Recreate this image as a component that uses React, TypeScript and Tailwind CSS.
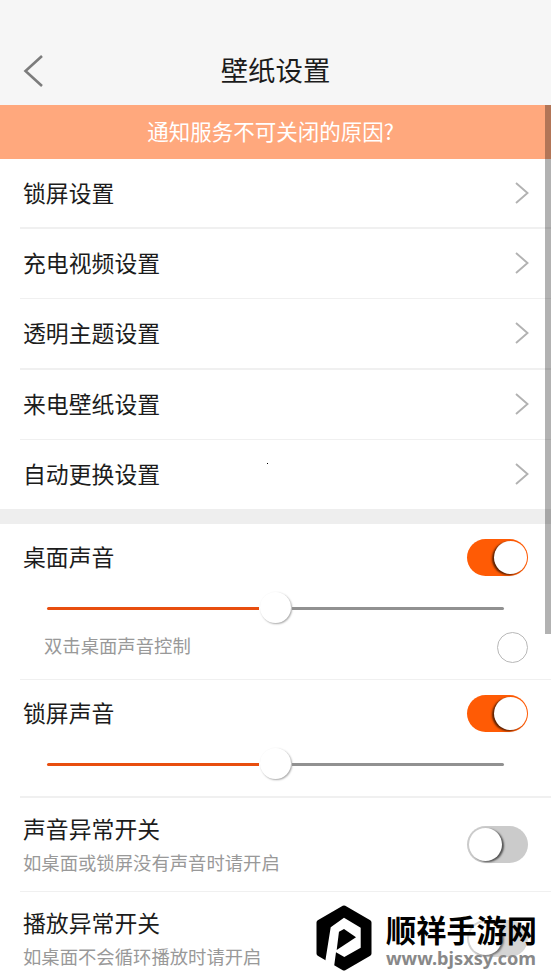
import clsx from 'clsx';

const links = [
  { label: '锁屏设置', className: 'h-[70px] border-b-2' },
  { label: '充电视频设置', className: 'h-[70px] border-b' },
  { label: '透明主题设置', className: 'h-[71px] border-b-2' },
  { label: '来电壁纸设置', className: 'h-[70px] border-b' },
  { label: '自动更换设置', className: 'h-[69px]' },
];

function Chevron() {
  return (
    <svg className="mb-px h-[22px] w-[14px]" viewBox="0 0 14 22" fill="none" stroke="#b2b2b2" strokeWidth="1.9">
      <path d="M1 1 L12.5 11 L1 21" />
    </svg>
  );
}

function Toggle({ on, faded }: { on: boolean; faded?: boolean }) {
  return (
    <span
      className={clsx(
        'flex h-[37px] w-[61px] shrink-0 items-center rounded-full',
        on ? 'justify-end bg-[#ff5b05] pr-[1.5px]' : 'justify-start bg-[#cbcbcb] pl-[2px]',
        faded && 'opacity-80',
      )}
    >
      <span
        className={clsx(
          'size-[33px] rounded-full bg-white',
          on ? 'shadow-[-2px_1px_2px_rgba(0,0,0,0.65)]' : 'shadow-[2px_1px_2px_rgba(0,0,0,0.6)]',
        )}
      />
    </span>
  );
}

function VolumeSlider() {
  return (
    <div className="ml-[47px] flex h-[32px] w-[457px] items-center">
      <span className="h-[3px] w-[212px] rounded-l-full bg-[#e84e0f]" />
      <span className="mx-px mb-[2px] size-[31px] rounded-full bg-white shadow-[1px_1px_2px_rgba(0,0,0,0.35)]" />
      <span className="h-[3px] flex-1 rounded-r-full bg-[#919191]" />
    </div>
  );
}

function SwitchRow({
  title,
  hint,
  className,
  faded,
}: {
  title: string;
  hint: string;
  className: string;
  faded?: boolean;
}) {
  return (
    <div className={clsx('ml-[20px] flex justify-between border-[#f0f0f0] pr-[23px] pl-[3px]', className)}>
      <div>
        <p className="text-[22.85px] leading-[34px]">{title}</p>
        <p className="text-[18.35px] leading-[34px] text-[#999]">{hint}</p>
      </div>
      <div className="pt-[15px]">
        <Toggle on={false} faded={faded} />
      </div>
    </div>
  );
}

function Watermark() {
  return (
    <div className="absolute top-[905px] left-[316px] flex">
      <svg className="h-[66px] w-[56px]" viewBox="0 0 56 66">
        <path
          d="M28 3 L53 17.5 V48.5 L28 63 L3 48.5 V17.5 Z"
          fill="#000"
          stroke="#000"
          strokeWidth="5"
          strokeLinejoin="round"
        />
        <path d="M14.7 22.3 L28 12.7 L44.7 22.7 V42.7 L28.3 52 L20 47.3 L18 62 L9.3 56 Z" fill="#fff" />
        <path d="M28 24 L40 32.3 L20.7 45 L23 26.7 Z" fill="#000" />
      </svg>
      <div className="pl-[14px] font-bold">
        <p className="mt-[6px] text-[30.2px] leading-[36px] whitespace-nowrap text-black">顺祥手游网</p>
        <p className="font-['Noto_Sans',sans-serif] text-[18.2px] leading-[22px] whitespace-nowrap text-[#888]">
          www.bjsxsy.com
        </p>
      </div>
    </div>
  );
}

export default function App() {
  return (
    <div className="relative h-[979px] w-[551px] overflow-hidden bg-white font-['Noto_Sans_CJK_SC',sans-serif] text-[#1c1c1c]">
      <header className="grid h-[105px] grid-cols-[60px_1fr_60px] items-center bg-[#f6f6f6] pt-[36px]">
        <svg className="ml-[23px] h-[32px] w-[20px]" viewBox="0 0 20 32" fill="none" stroke="#7c7c7c" strokeWidth="2.6">
          <path d="M19 1 L2.5 16 L19 31" />
        </svg>
        <h1 className="pb-[3px] text-center text-[27.4px] leading-[40px]">壁纸设置</h1>
      </header>

      <div className="flex h-[54px] items-center justify-center bg-[#ffa87d] pr-[10px] pb-[2px] text-[21.5px] text-white">
        通知服务不可关闭的原因?
      </div>

      <nav>
        {links.map((link) => (
          <div
            key={link.label}
            className={clsx(
              'ml-[20px] flex items-center justify-between border-[#f0f0f0] pr-[22px] pl-[3px] text-[22.85px]',
              link.className,
            )}
          >
            <span className="pb-[2px]">{link.label}</span>
            <Chevron />
          </div>
        ))}
      </nav>

      <div className="h-[15px] bg-[#eee]" />

      {/* Desktop sound */}
      <section className="h-[156px] pt-[15px]">
        <div className="flex h-[37px] items-center justify-between pr-[23px] pl-[23px] text-[22.85px]">
          <span className="pb-[2px]">桌面声音</span>
          <Toggle on />
        </div>
        <div className="mt-[16px]">
          <VolumeSlider />
        </div>
        <div className="mt-[8px] flex h-[31px] justify-between pr-[23px] pl-[44px]">
          <span className="text-[18.35px] leading-[26px] text-[#999]">双击桌面声音控制</span>
          <span className="size-[31px] rounded-full border border-[#b8b8b8]" />
        </div>
        <div className="mt-[16px] ml-[20px] h-px bg-[#f0f0f0]" />
      </section>

      {/* Lock screen sound */}
      <section className="h-[118px] pt-[15px]">
        <div className="flex h-[37px] items-center justify-between pr-[23px] pl-[23px] text-[22.85px]">
          <span className="pb-[2px]">锁屏声音</span>
          <Toggle on />
        </div>
        <div className="mt-[16px]">
          <VolumeSlider />
        </div>
        <div className="mt-[16px] ml-[20px] h-[2px] bg-[#f0f0f0]" />
      </section>

      <SwitchRow title="声音异常开关" hint="如桌面或锁屏没有声音时请开启" className="h-[94px] border-b pt-[13px]" />
      <SwitchRow title="播放异常开关" hint="如桌面不会循环播放时请开启" className="h-[87px] pt-[13px]" faded />

      {/* Scrollbar */}
      <div className="absolute top-[105px] right-0 h-[529px] w-[6px] bg-black/30" />
      <div className="absolute top-[463px] left-[267px] size-px bg-black" />

      <Watermark />
    </div>
  );
}
